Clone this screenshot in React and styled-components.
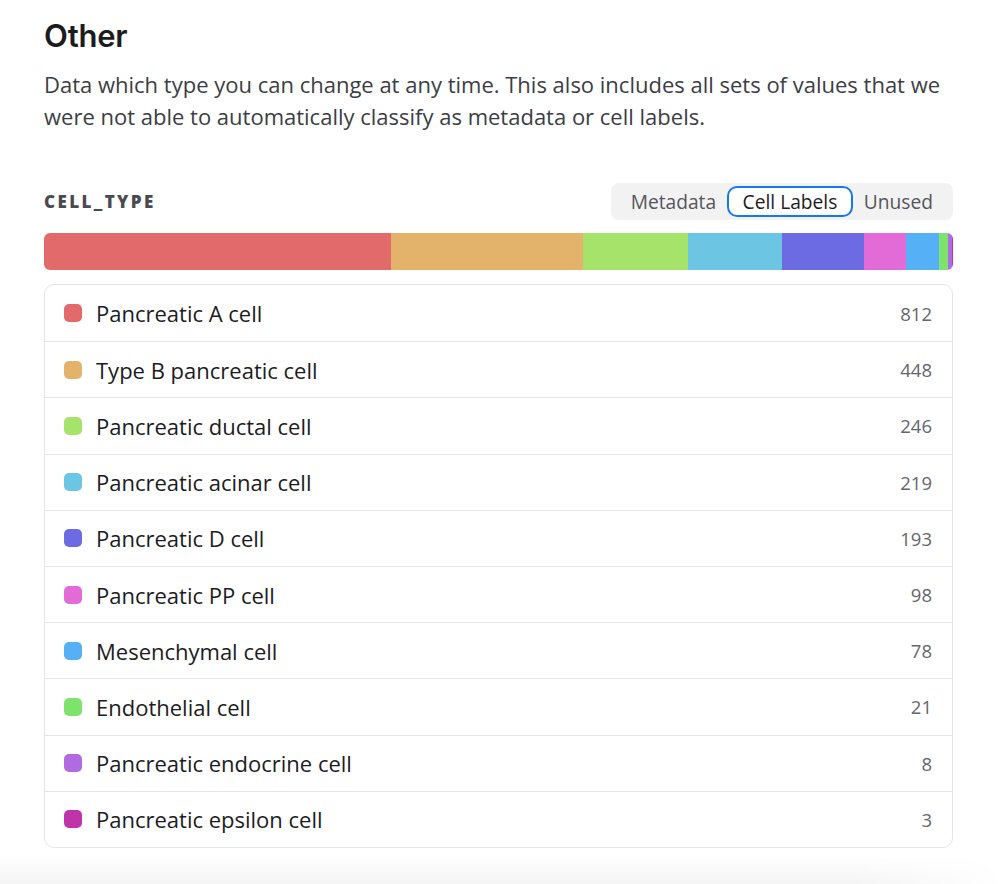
import React from "react";
import styled, { createGlobalStyle } from "styled-components";

const Global = createGlobalStyle`
  html, body { margin: 0; padding: 0; background: #ffffff; }
  body { font-family: "Open Sans", "Noto Sans", sans-serif; -webkit-font-smoothing: antialiased; }
`;

const Page = styled.div`
  width: 1004px;
  min-height: 884px;
  display: flex;
  flex-direction: column;
  background: #fff;
`;

const Section = styled.section`
  padding: 18px 51px 0 44px;
  display: flex;
  flex-direction: column;
`;

const Title = styled.h2`
  margin: 0;
  font-family: "Inter", sans-serif;
  font-weight: 600;
  font-size: 31px;
  line-height: 36px;
  color: #1c1c1f;
  letter-spacing: -0.2px;
`;

const Description = styled.p`
  margin: 14px 0 0;
  font-size: 22px;
  line-height: 32px;
  color: #3d3d45;
`;

const Header = styled.div`
  margin-top: 51px;
  display: flex;
  align-items: center;
  justify-content: space-between;
`;

const FieldName = styled.div`
  font-size: 17px;
  font-weight: 800;
  letter-spacing: 2.4px;
  color: #4a4a52;
`;

const Segmented = styled.div`
  display: flex;
  align-items: center;
  height: 37px;
  padding: 0 9px;
  background: #f2f2f3;
  border-radius: 8px;
  box-sizing: border-box;
`;

const Segment = styled.button`
  height: 31px;
  padding: 0 ${(p) => (p.$active ? 13.5 : 11)}px;
  border: ${(p) => (p.$active ? "2px solid #1677f2" : "none")};
  border-radius: 10px;
  background: ${(p) => (p.$active ? "#ffffff" : "transparent")};
  font-family: "Open Sans", "Noto Sans", sans-serif;
  font-size: 19.2px;
  color: ${(p) => (p.$active ? "#1c1c1f" : "#55555d")};
  cursor: pointer;
  box-sizing: border-box;
  display: flex;
  align-items: center;
`;

const Bar = styled.div`
  margin-top: 13px;
  height: 37px;
  display: flex;
  border-radius: 6px;
  overflow: hidden;
`;

const BarPart = styled.div`
  height: 100%;
  background: ${(p) => p.$color};
`;

const List = styled.div`
  margin-top: 14px;
  border: 1px solid #e4e4e6;
  border-radius: 10px;
  display: flex;
  flex-direction: column;
`;

const Row = styled.div`
  height: 56.2px;
  display: flex;
  align-items: center;
  padding: 0 20px 0 19px;
  box-sizing: border-box;
  border-top: ${(p) => (p.$first ? "none" : "1px solid #e4e4e6")};
`;

const Dot = styled.span`
  width: 18px;
  height: 18px;
  border-radius: 5px;
  background: ${(p) => p.$color};
  flex: none;
`;

const Label = styled.span`
  margin-left: 14px;
  font-size: 22px;
  color: #1c1c1f;
  flex: 1;
`;

const Count = styled.span`
  font-size: 18.5px;
  color: #66666d;
`;

const Fade = styled.div`
  margin-top: 8px;
  height: 30px;
  background: linear-gradient(to bottom, #ffffff, #f3f3f3);
  -webkit-mask-image: linear-gradient(to right, #000 85%, transparent 100%);
  mask-image: linear-gradient(to right, #000 85%, transparent 100%);
`;

const data = [
  { name: "Pancreatic A cell", count: 812, color: "#e36a6a" },
  { name: "Type B pancreatic cell", count: 448, color: "#e3b26b" },
  { name: "Pancreatic ductal cell", count: 246, color: "#a6e36b" },
  { name: "Pancreatic acinar cell", count: 219, color: "#6bc5e3" },
  { name: "Pancreatic D cell", count: 193, color: "#6d6be3" },
  { name: "Pancreatic PP cell", count: 98, color: "#e36bd7" },
  { name: "Mesenchymal cell", count: 78, color: "#55b0f5" },
  { name: "Endothelial cell", count: 21, color: "#7de36b" },
  { name: "Pancreatic endocrine cell", count: 8, color: "#b06be3" },
  { name: "Pancreatic epsilon cell", count: 3, color: "#c034a9" },
];

export default function App() {
  return (
    <Page>
      <Global />
      <Section>
        <Title>Other</Title>
        <Description>
          Data which type you can change at any time. This also includes all sets of values that we
          were not able to automatically classify as metadata or cell labels.
        </Description>
        <Header>
          <FieldName>CELL_TYPE</FieldName>
          <Segmented>
            <Segment>Metadata</Segment>
            <Segment $active>Cell Labels</Segment>
            <Segment>Unused</Segment>
          </Segmented>
        </Header>
        <Bar>
          {data.map((d) => (
            <BarPart key={d.name} $color={d.color} style={{ flex: `${d.count} 0 0` }} />
          ))}
        </Bar>
        <List>
          {data.map((d, i) => (
            <Row key={d.name} $first={i === 0}>
              <Dot $color={d.color} />
              <Label>{d.name}</Label>
              <Count>{d.count}</Count>
            </Row>
          ))}
        </List>
      </Section>
      <Fade />
    </Page>
  );
}
